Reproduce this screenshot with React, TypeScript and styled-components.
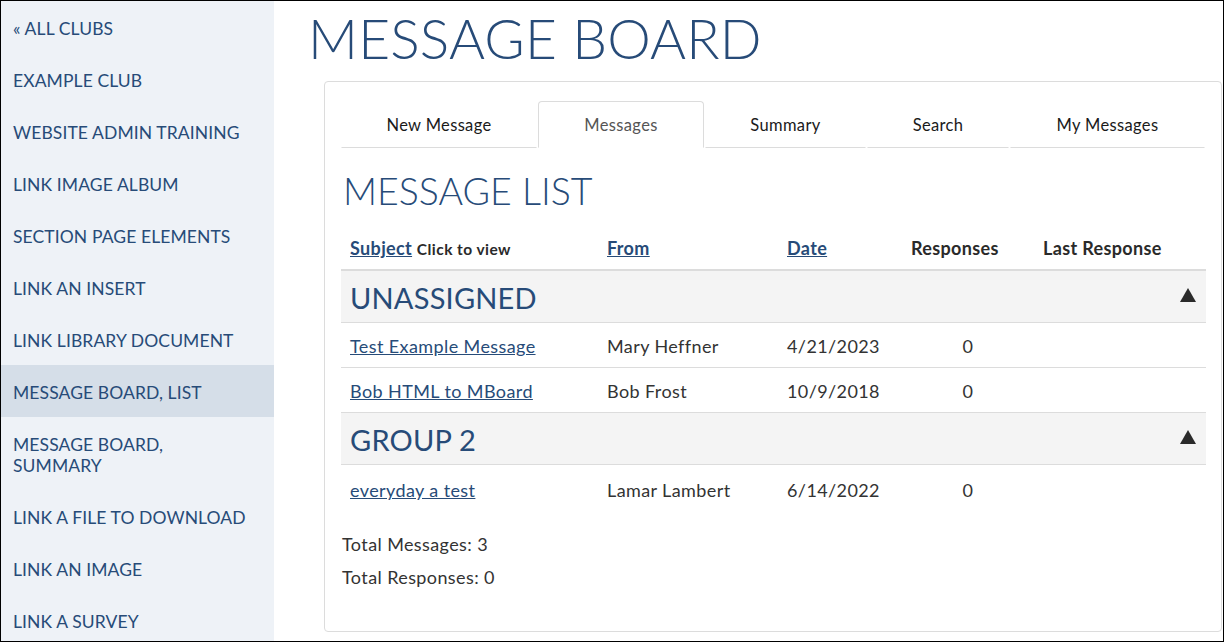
import React from "react";
import styled, { createGlobalStyle } from "styled-components";

const Global = createGlobalStyle`
  html, body { margin: 0; padding: 0; background: #fff; }
  body { font-family: "Lato", "Open Sans", sans-serif; }
  * { box-sizing: border-box; }
`;

const NAVY = "#274b78";

const Frame = styled.div`
  width: 1224px;
  height: 642px;
  border: 1px solid #000;
  display: grid;
  grid-template-columns: 273px 1fr;
  overflow: hidden;
`;

const Sidebar = styled.nav`
  background: #eef2f7;
  padding-top: 0;
  display: flex;
  flex-direction: column;
`;

const NavItem = styled.a<{ $active?: boolean }>`
  display: block;
  padding: 17px 12px 14px;
  line-height: 21px;
  font-size: 17.5px;
  letter-spacing: 0.1px;
  color: ${NAVY};
  text-transform: uppercase;
  text-decoration: none;
  background: ${(p) => (p.$active ? "#d5dee8" : "transparent")};
`;

const Main = styled.main`
  padding: 0 1px 14px 34px;
  display: flex;
  flex-direction: column;
  min-height: 0;
`;

const PageTitle = styled.h1`
  margin: 3px 0 0;
  font-weight: 300;
  font-size: 55px;
  line-height: 68px;
  color: ${NAVY};
  letter-spacing: 0.2px;
`;

const Card = styled.section`
  margin: 9px 0 0 16px;
  flex: 1;
  border: 1px solid #dcdcdc;
  border-radius: 4px;
  padding: 19px 15px 0 16px;
`;

const Tabs = styled.div`
  display: flex;
  height: 47px;
`;

const Tab = styled.div<{ $active?: boolean; $w: number }>`
  width: ${(p) => p.$w}px;
  display: flex;
  align-items: center;
  justify-content: center;
  font-size: 16.5px;
  letter-spacing: 0.35px;
  color: ${(p) => (p.$active ? "#555" : "#1a1a1a")};
  border: 1px solid ${(p) => (p.$active ? "#dcdcdc" : "transparent")};
  border-bottom: 1px solid ${(p) => (p.$active ? "transparent" : "#dcdcdc")};
  border-radius: ${(p) => (p.$active ? "4px 4px 0 0" : "0")};
  margin-right: 1px;
`;

const ListTitle = styled.h2`
  margin: 20px 0 0 2px;
  font-weight: 300;
  font-size: 37.5px;
  line-height: 46px;
  color: ${NAVY};
`;

const Table = styled.table`
  width: 100%;
  border-collapse: collapse;
  margin-top: 12px;
`;

const Th = styled.th<{ $w?: number }>`
  text-align: left;
  width: ${(p) => (p.$w ? `${p.$w}px` : "auto")};
  padding: 0 9px;
  height: 44px;
  font-size: 18px;
  letter-spacing: 0.35px;
  font-weight: 700;
  color: #2a2a2a;
  border-bottom: 2px solid #dcdcdc;
  vertical-align: middle;
  white-space: nowrap;
`;

const HeadLink = styled.a`
  color: ${NAVY};
  text-decoration: underline;
`;

const HeadNote = styled.span`
  font-size: 15.5px;
  letter-spacing: 0.45px;
  font-weight: 700;
  color: #2a2a2a;
`;

const GroupCell = styled.td`
  background: #f4f4f4;
  height: 52px;
  padding: 2px 9px 0;
  border-bottom: 1px solid #dcdcdc;
  vertical-align: middle;
`;

const GroupBar = styled.div`
  display: flex;
  align-items: center;
  justify-content: space-between;
`;

const GroupName = styled.span`
  font-size: 29px;
  color: ${NAVY};
  font-weight: 400;
  letter-spacing: 0.2px;
`;

const Caret = styled.svg`
  width: 16px;
  height: 14px;
  margin-right: 1px;
  margin-top: -4px;
  fill: #2a2a2a;
`;

const Td = styled.td<{ $center?: boolean; $last?: boolean }>`
  height: ${(p) => (p.$last ? "48px" : "45px")};
  padding: 3px 9px 0;
  font-size: 18px;
  letter-spacing: 0.4px;
  color: #333;
  text-align: ${(p) => (p.$center ? "center" : "left")};
  border-bottom: ${(p) => (p.$last ? "none" : "1px solid #dcdcdc")};
  vertical-align: middle;
  white-space: nowrap;
`;

const RowLink = styled.a`
  color: ${NAVY};
  text-decoration: underline;
`;

const Totals = styled.div`
  margin-top: 21px;
  display: flex;
  flex-direction: column;
  gap: 11px;
  font-size: 18px;
  letter-spacing: 0.4px;
  color: #333;
  padding-left: 1px;
`;

const navItems = [
  "« All Clubs",
  "Example Club",
  "Website Admin Training",
  "Link Image Album",
  "Section Page Elements",
  "Link an Insert",
  "Link Library Document",
  "Message Board, List",
  "Message Board, Summary",
  "Link a File to Download",
  "Link an Image",
  "Link a Survey",
];

const tabs = [
  { label: "New Message", w: 196 },
  { label: "Messages", w: 166, active: true },
  { label: "Summary", w: 161 },
  { label: "Search", w: 142 },
  { label: "My Messages", w: 195 },
];

const groups = [
  {
    name: "UNASSIGNED",
    rows: [
      { subject: "Test Example Message", from: "Mary Heffner", date: "4/21/2023", resp: "0" },
      { subject: "Bob HTML to MBoard", from: "Bob Frost", date: "10/9/2018", resp: "0" },
    ],
  },
  {
    name: "GROUP 2",
    rows: [{ subject: "everyday a test", from: "Lamar Lambert", date: "6/14/2022", resp: "0" }],
  },
];

export default function App() {
  return (
    <>
      <Global />
      <Frame>
        <Sidebar>
          {navItems.map((n) => (
            <NavItem key={n} $active={n === "Message Board, List"}>
              {n === "Message Board, Summary" ? (
                <>
                  Message Board,
                  <br />
                  Summary
                </>
              ) : (
                n
              )}
            </NavItem>
          ))}
        </Sidebar>
        <Main>
          <PageTitle>MESSAGE BOARD</PageTitle>
          <Card>
            <Tabs>
              {tabs.map((t) => (
                <Tab key={t.label} $w={t.w} $active={t.active}>
                  {t.label}
                </Tab>
              ))}
            </Tabs>
            <ListTitle>MESSAGE LIST</ListTitle>
            <Table>
              <thead>
                <tr>
                  <Th $w={257}>
                    <HeadLink>Subject</HeadLink> <HeadNote>Click to view</HeadNote>
                  </Th>
                  <Th $w={180}>
                    <HeadLink>From</HeadLink>
                  </Th>
                  <Th $w={124}>
                    <HeadLink>Date</HeadLink>
                  </Th>
                  <Th $w={132}>Responses</Th>
                  <Th>Last Response</Th>
                </tr>
              </thead>
              <tbody>
                {groups.map((g, gi) => (
                  <React.Fragment key={g.name}>
                    <tr>
                      <GroupCell colSpan={5}>
                        <GroupBar>
                          <GroupName>{g.name}</GroupName>
                          <Caret viewBox="0 0 16 14">
                            <polygon points="8,0 16,14 0,14" />
                          </Caret>
                        </GroupBar>
                      </GroupCell>
                    </tr>
                    {g.rows.map((r, ri) => {
                      const last = gi === groups.length - 1 && ri === g.rows.length - 1;
                      return (
                        <tr key={r.subject}>
                          <Td $last={last}>
                            <RowLink>{r.subject}</RowLink>
                          </Td>
                          <Td $last={last}>{r.from}</Td>
                          <Td $last={last}>{r.date}</Td>
                          <Td $last={last} $center>
                            {r.resp}
                          </Td>
                          <Td $last={last}></Td>
                        </tr>
                      );
                    })}
                  </React.Fragment>
                ))}
              </tbody>
            </Table>
            <Totals>
              <span>Total Messages: 3</span>
              <span>Total Responses: 0</span>
            </Totals>
          </Card>
        </Main>
      </Frame>
    </>
  );
}
